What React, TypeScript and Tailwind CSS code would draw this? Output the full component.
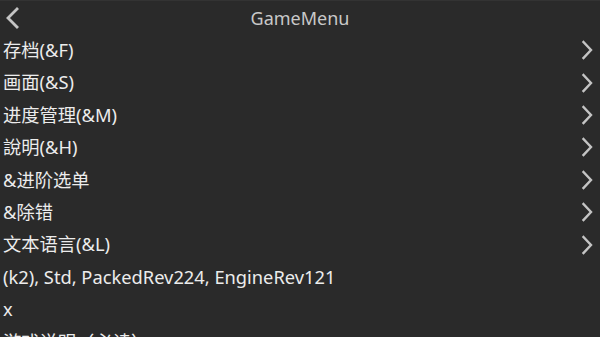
import React from "react";

const items = [
  { label: "存档(&F)", arrow: true },
  { label: "画面(&S)", arrow: true },
  { label: "进度管理(&M)", arrow: true },
  { label: "說明(&H)", arrow: true },
  { label: "&进阶选单", arrow: true },
  { label: "&除错", arrow: true },
  { label: "文本语言(&L)", arrow: true },
  { label: "(k2), Std, PackedRev224, EngineRev121", arrow: false },
  { label: "x", arrow: false },
  { label: "游戏说明（必读）", arrow: false },
];

function ChevronRight() {
  return (
    <svg width="12" height="20" viewBox="0 0 12 20" fill="none">
      <path d="M2.5 2 L10 10 L2.5 18" stroke="#c4c4c4" strokeWidth="2.4" strokeLinecap="square" />
    </svg>
  );
}

function ChevronLeft() {
  return (
    <svg width="16" height="24" viewBox="0 0 16 24" fill="none">
      <path d="M13 3 L4 12 L13 21" stroke="#c4c4c4" strokeWidth="2.8" strokeLinecap="square" />
    </svg>
  );
}

export default function App() {
  return (
    <div
      className="w-[600px] h-[337px] overflow-hidden bg-[#2a2a2a] text-[#ececec] border-t border-[#333]"
      style={{ fontFamily: '"Noto Sans", "Noto Sans CJK SC", sans-serif' }}
    >
      <div className="relative h-[33px] flex items-center justify-center">
        <div className="absolute left-[4px] top-[5px]">
          <ChevronLeft />
        </div>
        <span className="text-[18px] text-[#c8c8c8] leading-none">GameMenu</span>
      </div>
      <div className="flex flex-col">
        {items.map((it) => (
          <div key={it.label} className="h-[32.4px] shrink-0 flex items-center justify-between pl-[3px] pr-[7px]">
            <span className="text-[18.3px] leading-none whitespace-nowrap">{it.label}</span>
            {it.arrow && <ChevronRight />}
          </div>
        ))}
      </div>
    </div>
  );
}
